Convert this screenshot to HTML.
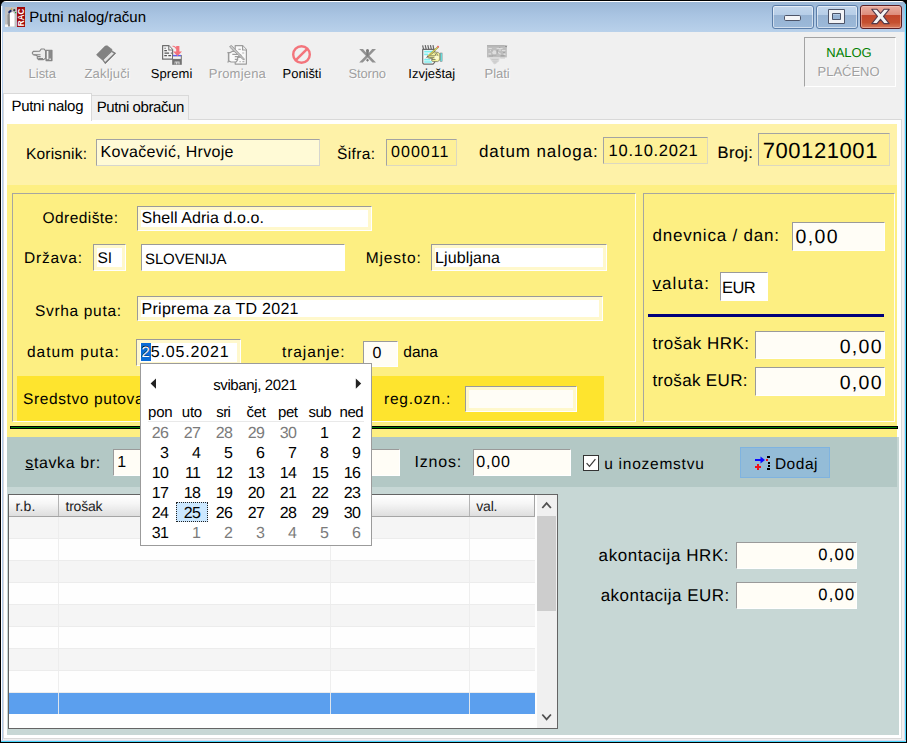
<!DOCTYPE html>
<html>
<head>
<meta charset="utf-8">
<title>Putni nalog/račun</title>
<style>
*{box-sizing:border-box;margin:0;padding:0}
html,body{width:907px;height:743px;overflow:hidden;background:#000}
body{font-family:"Liberation Sans",sans-serif;position:relative}
.abs,.t,.f,.pn{position:absolute}
.t{white-space:nowrap;line-height:20px;height:20px;text-rendering:geometricPrecision}
/* window */
#win{left:1px;top:1px;width:905px;height:741px;border-radius:5px 5px 0 0;overflow:hidden;
 background:linear-gradient(#fff 0,#fff 1px,#9bb7d6 1px,#a9c4e2 14px,#b9d1ea 31px,#b9d1ea 100%)}
#bl{left:0;top:5px;width:1px;height:736px;background:#fff}
#bl2{left:1px;top:5px;width:1px;height:736px;background:#b4cdec}
#br1{left:903px;top:31px;width:1px;height:710px;background:#d5daf0}
#br2{left:904px;top:3px;width:1px;height:738px;background:#48d6fa}
#bb1{left:0;top:739px;width:905px;height:1px;background:#d5daf0}
#bb2{left:0;top:740px;width:905px;height:1px;background:#48d6fa}
#client{left:2px;top:31px;width:901px;height:708px;background:#f0f0f0}
/* fields */
.f{border:1px solid;border-color:#9a9a9a #fff #fff #9a9a9a;background:#fff}
.ring{box-shadow:inset 0 0 0 3px #fff8cc}
.cr{background:#fffdf6}
.gb{position:absolute;border:1px solid;border-color:#a6a6a0 #fffdf0 #fffdf0 #a6a6a0}
.cb{border:1px solid #5c7ea9;border-radius:3px;box-shadow:inset 0 0 0 1px rgba(255,255,255,.55);
 background:linear-gradient(#c3d6ec 0,#b6cde7 42%,#97b3d3 43%,#9cb9d9 100%)}
.cx{border-color:#5c1f24;box-shadow:inset 0 0 0 1px rgba(255,210,200,.45);
 background:linear-gradient(#e9ada0 0,#dd8a79 42%,#c2452b 43%,#c5502f 75%,#d67a5c 100%)}
</style>
</head>
<body>
<div id="win" class="abs">
 <div id="bl" class="abs"></div><div id="bl2" class="abs"></div>
 <div id="br1" class="abs"></div><div id="br2" class="abs"></div>
 <div id="bb1" class="abs"></div><div id="bb2" class="abs"></div>
 <div id="client" class="abs"></div>
</div>
<!-- title bar -->
<svg class="abs" style="left:5px;top:7px" width="20" height="20" viewBox="0 0 20 20">
 <rect width="12" height="20" fill="#c2c2c2"/>
 <rect x="12" width="8" height="20" fill="#a10a0a"/>
 <path d="M5 6 L8 5 L9.5 7 L9.5 19.5 L5 19.5 Z" fill="#fff"/>
 <path d="M2.5 8 L4.5 5 L5 19 L2.5 19 Z" fill="#8d8d8d"/>
 <path d="M3 5 L5.5 2.5 L7 4 L4 6.5Z" fill="#1c2a6b"/>
 <circle cx="9.3" cy="3.2" r="1.1" fill="#3a3a3a"/>
 <rect x="6" y="1.5" width="1.2" height="1.2" fill="#c7a21a"/>
 <rect x="10" y="5" width="1.2" height="1.2" fill="#22a233"/>
 <rect x="0" y="17.5" width="3" height="2.5" fill="#f4f4f4"/>
 <text transform="translate(19 19.2) rotate(-90)" font-family="Liberation Sans, sans-serif" font-weight="bold" font-size="8.6" fill="#fff" textLength="17.5" lengthAdjust="spacingAndGlyphs">RAC</text>
</svg>
<span class="t" style="left:29.3px;top:7.6px;font-size:15px;color:#000">Putni nalog/račun</span>
<!-- caption buttons -->
<div class="abs cb" style="left:772px;top:5px;width:42px;height:24px"></div>
<div class="abs cb" style="left:816px;top:5px;width:42px;height:24px"></div>
<div class="abs cb cx" style="left:860px;top:5px;width:42px;height:24px"></div>
<svg class="abs" style="left:772px;top:5px" width="130" height="24" viewBox="0 0 130 24">
 <rect x="12.5" y="10.5" width="16" height="5" rx="1.2" fill="#f4f5f8" stroke="#4d5468" stroke-width="1"/>
 <path d="M56.5 4.5 h16 v14 h-16 Z M60.5 8.5 v6 h8 v-6 Z" fill="#f2f3f6" fill-rule="evenodd" stroke="#4d5468" stroke-width="1"/>
 <path d="M99.8 4.3 H105 L108.5 8.5 L112 4.3 H117.2 L111.5 11.4 L117.2 18.6 H112 L108.5 14.3 L105 18.6 H99.8 L105.5 11.4 Z" fill="#f3f3f3" stroke="#54394a" stroke-width="1.1" stroke-linejoin="round"/>
</svg>

<!--TB0--><!-- toolbar icons : each svg is 36x28 at y=40 -->
<svg class="abs" style="left:26px;top:40px" width="36" height="28" viewBox="0 0 36 28">
 <g fill="#ececec" stroke="#858585" stroke-width="1.1" stroke-linejoin="round">
  <path d="M13.5 11.3 L15.2 9 L18.2 9 L19.6 10.8 L19.6 18.2 L17.5 19.6 L12.5 19.6 L11.3 18.3 L11.3 16 L10 15.2 L7.3 14.7 L6.2 13 L7.3 11.4 Z"/>
  <path d="M7.5 14.7 H14.5 M11.5 16.6 H14.6 M12.3 18.6 H17" fill="none"/>
  <rect x="20" y="10.2" width="6" height="10.4" fill="#8a8a8a"/>
  <rect x="20.8" y="11" width="1.6" height="8.2" fill="#f2f2f2" stroke="none"/>
  <rect x="23.2" y="18.6" width="1.8" height="1.2" fill="#e8e8e8" stroke="none"/>
 </g>
</svg>
<svg class="abs" style="left:90px;top:40px" width="36" height="28" viewBox="0 0 36 28">
 <path d="M21.8 10.9 L25.7 13.2 L15.3 23.7 L12.4 19.6 Z" fill="#7a7a7a" stroke="#7c7c7c" stroke-width=".8" stroke-linejoin="round"/>
 <path d="M21.6 12 L23.9 13.4 L15.1 21.9 L13.6 19.8 Z" fill="#e6e6e6"/>
 <path d="M15.2 6 L17.2 5.8 L22 9.4 L21.9 10.8 L12.2 19.8 L6.9 15.3 L7 14.2 Z" fill="#828282" stroke="#7a7a7a" stroke-width=".6" stroke-linejoin="round"/>
</svg>
<svg class="abs" style="left:154px;top:40px" width="36" height="28" viewBox="0 0 36 28">
 <path d="M8.6 5.7 H14.8 L18.6 9.6 V19.2 H8.6 Z" fill="#f4f4f4" stroke="#6f6f6f" stroke-width="1.2" stroke-linejoin="round"/>
 <path d="M14.8 5.7 V10 H18.6" fill="#fff" stroke="#6f6f6f" stroke-width="1.1"/>
 <path d="M10.5 8.3 h1.2 M10.3 10.6 h2.6 M10.5 13.1 h4.6 M16.8 13.1 h1 M10.3 15.6 h2.6 M14.3 15.6 h2.8" stroke="#555" stroke-width="1.1"/>
 <path d="M17.8 6 Q21 5.4 22.2 7.4 L22.2 6 L25.4 6 L25.4 11.4 L28 11.4 L23.5 16 L19 11.4 L22.2 11.4 L22.2 9.2 Q21 7 17.8 6 Z" fill="#f4727a"/>
 <rect x="18.2" y="15" width="9.6" height="9.8" fill="#727272"/>
 <rect x="19" y="14.9" width="8" height="1.5" fill="#5f5ff2"/>
 <path d="M22.7 14.9 L23.5 16.2 L24.3 14.9Z" fill="#f4727a"/>
 <rect x="19" y="16.4" width="7.8" height="2.5" fill="#f2f2f2"/>
 <path d="M20.6 21.4 h5 v3.2 h-1.2 v-2 h-1 v2 h-1.4 v-2 h-.7 v2 h-.7 Z" fill="#d4d4d4"/>
</svg>
<svg class="abs" style="left:219px;top:40px" width="36" height="28" viewBox="0 0 36 28">
 <g stroke="#9c9c9c" stroke-width="1.2" fill="#fafafa" stroke-linejoin="round">
  <path d="M16.2 5.7 H23.6 L27.4 9.6 V24.1 H16.2 Z"/>
  <path d="M23.6 5.7 V10 H27.4" fill="#f4f4f4"/>
  <path d="M19.4 9.4 h2.4 M23.2 13 h2 M20.5 21.6 h1.2 M23.4 21.6 h2" stroke="#b0b0b0"/>
  <path d="M8.4 12.6 H11.4 L13.4 11.2 L16.4 11.6 L19.4 14.4 L21.8 15 L22 17 L18.6 17.6 L18.6 19.8 L17.2 21.8 L12 22 L10.6 21.2 L8.4 22.3" />
  <path d="M9.6 12.6 V21.6" stroke-width="1.6"/>
  <path d="M13.3 14.4 H19.4 M15.8 16.6 H21 M15.8 19.4 H18.4" fill="none"/>
  <path d="M11 6.2 L12.5 5.4 L25 18.6 L25.3 19.8 L24 19.5 L10.6 7 Z" fill="#c6c6c6" stroke-width=".9"/>
 </g>
</svg>
<svg class="abs" style="left:284px;top:40px" width="36" height="28" viewBox="0 0 36 28">
 <circle cx="17.5" cy="14.5" r="8.3" fill="none" stroke="#f3747b" stroke-width="2.4"/>
 <path d="M11.8 20.2 L23.2 8.8" stroke="#f3747b" stroke-width="2.5"/>
</svg>
<svg class="abs" style="left:349px;top:40px" width="36" height="28" viewBox="0 0 36 28">
 <g fill="#929292">
  <path d="M10.2 9 H14 L18.6 14.2 L23.2 9 H27 L20.4 15.8 L27 22.6 H23.4 L18.6 17.4 L13.8 22.6 H10.2 L16.8 15.8 Z"/>
  <path d="M17 10 Q18.5 8 20 10 L19.4 16.5 H17.6 Z" fill="#7c7c7c"/>
  <path d="M18.5 18.6 L20 20.2 L18.5 21.8 L17 20.2Z" fill="#7c7c7c"/>
 </g>
</svg>
<svg class="abs" style="left:414px;top:40px" width="36" height="28" viewBox="0 0 36 28">
 <path d="M8.7 9.4 H20.6 V22.4 L19 24.2 H9.8 L8.7 23 Z" fill="#fafafa" stroke="#6d6d6d" stroke-width="1.2" stroke-linejoin="round"/>
 <path d="M10.2 11.7 h8.8 M10.2 14.4 h4 M10.2 19.6 h6 M10.2 22 h7.6" stroke="#7df0f0" stroke-width="1.7"/>
 <path d="M8.6 5.4 L9.6 9.4 M11.2 5.2 L12.2 9.4 M13.8 5.2 L14.8 9.4 M16.4 5.2 L17.4 9.4 M19 5.2 L19.8 9.4" stroke="#666" stroke-width="1.2"/>
 <rect x="26.2" y="13" width="1.9" height="8.4" fill="#67efef" stroke="#777" stroke-width=".5"/>
 <path d="M17.6 13.8 L20.4 12 L24.2 12.4 L25.8 14 L25.8 20 L23.6 21.6 L18.4 21.4 L17.4 19.8 L18.8 18.8 L13.8 17.8 L14.2 15.8 Z" fill="#f5f39c" stroke="#77775e" stroke-width=".8" stroke-linejoin="round"/>
 <path d="M15 15.8 h7.4 M15.4 17.6 h5.6 M17.6 19.5 h4.4 M22.4 13 l1.6 3 M21 13.4 l1 2.2" stroke="#6e6e5a" stroke-width=".8" fill="none"/>
 <circle cx="22.6" cy="17.6" r="2.2" fill="#fbfad2"/>
 <path d="M23.6 6.6 L24.6 7.5 L14.6 16.6 L13.6 15.8 Z" fill="#e6de50" stroke="#77774e" stroke-width=".5"/>
 <path d="M22.8 7 L23.9 5.6 L25.2 6.6 L24.2 8Z" fill="#ee6a6a"/>
 <path d="M13.6 15.8 L11.4 18.4 L14.6 16.6Z" fill="#666"/>
</svg>
<svg class="abs" style="left:479px;top:40px" width="36" height="28" viewBox="0 0 36 28">
 <rect x="8" y="5.2" width="19.8" height="12.2" fill="#bebebe"/>
 <rect x="8" y="5.2" width="17.6" height="1.1" fill="#adadad"/>
 <path d="M26 6 L27.3 6.9 L27.9 5.8" stroke="#8e8e8e" stroke-width="1" fill="none"/>
 <path d="M10 17.4 L12 20.6 L14.4 23.4 L15.6 24.6 L17.4 23.2 L20 21.4 L20.6 18.4 L21 17.4Z" fill="#dadada"/>
 <path d="M21 17.4 h5 v1 h-4.6Z" fill="#c9c9c9"/>
 <g fill="#dedede"><circle cx="15.4" cy="12.4" r="2.2"/><path d="M9.4 8 h3.4 v1 h-3.4Z M17.6 8 h6 v.9 h-6Z M18.6 11.4 l3.4 2.4 l-.6 .9 l-3.4 -2.4Z M9.4 13.2 h2.6 v1.2 h-2.6Z M23 10 h3.4 v1 h-3.4Z M11.4 9.8 l2 1.4 l-.5 .7 l-2 -1.4Z M20 9.6 h2 v.8 h-2Z M24.6 13.4 h2 v1.6 h-2Z"/></g>
 <g fill="#a6a6a6"><path d="M12 10.6 h1.6 v.9 h-1.6Z M17.6 10 h1.2 v3.6 h-1.2Z M21.6 15 h4 v1.4 h-4Z M10 15.6 h4 v1 h-4Z M24 12 h2 v.9 h-2Z M13.4 14.8 h4 v.8 h-4Z M20 7 h1.4 v.8 h-1.4Z"/></g>
 <g fill="#c4c4c4"><path d="M12.4 19 h7 v.8 h-7Z M13.6 20.8 h5 v.8 h-5Z M14.6 22.4 h2.8 v.8 h-2.8Z"/></g>
</svg>
<!-- NALOG / PLACENO panel -->
<div class="abs" style="left:804px;top:37px;width:92px;height:50px;border:1px solid;border-color:#a3a3a3 #fff #fff #a3a3a3"></div>
<!--TB1-->
<!-- tabs -->
<div class="abs" style="left:3px;top:119px;width:899px;height:620px;border:1px solid #d9d9d9;background:#fff"></div>
<div class="abs" style="left:91px;top:95px;width:98px;height:25px;border:1px solid #d9d9d9;border-bottom:none;background:#f0f0f0"></div>
<div class="abs" style="left:3px;top:93px;width:89px;height:28px;border:1px solid #d9d9d9;border-bottom:none;background:#fff"></div>

<!-- yellow panels -->
<div class="abs" style="left:7px;top:124px;width:890px;height:61px;background:#fef2a8"></div>
<div class="abs" style="left:7px;top:185px;width:890px;height:252px;background:#fdef82"></div>
<!-- grey-blue panels -->
<div class="abs" style="left:7px;top:437px;width:892px;height:298px;background:#c7d7d5"></div>
<div class="abs" style="left:7px;top:437px;width:890px;height:50px;background:#b3c8c5"></div>
<!-- separator -->
<div class="abs" style="left:10px;top:426px;width:888px;height:3px;background:#008000;border:1px solid #000"></div>

<!-- group boxes -->
<div class="gb" style="left:12px;top:193px;width:624px;height:229px"></div>
<div class="gb" style="left:643px;top:193px;width:252px;height:229px"></div>
<div class="abs" style="left:17px;top:376px;width:587px;height:45px;background:#fee42e"></div>
<div class="abs" style="left:648px;top:314px;width:236px;height:3px;background:#00007a"></div>

<!-- top strip fields -->
<div class="f" style="left:96px;top:139px;width:224px;height:27px;background:#fffad6;border-color:#a3a3a3 #d6d6d0 #d6d6d0 #a3a3a3"></div>
<div class="f" style="left:386px;top:139px;width:71px;height:27px;background:#fef098;border-color:#a3a3a3 #dcd8c0 #dcd8c0 #a3a3a3"></div>
<div class="f" style="left:603px;top:137px;width:105px;height:27px;background:#fef098;border-color:#a3a3a3 #dcd8c0 #dcd8c0 #a3a3a3"></div>
<div class="f" style="left:758px;top:133px;width:132px;height:33px;background:#fef098;border-color:#a3a3a3 #dcd8c0 #dcd8c0 #a3a3a3"></div>

<!-- left group fields -->
<div class="f ring" style="left:137px;top:206px;width:235px;height:25px"></div>
<div class="f ring" style="left:93px;top:244px;width:33px;height:27px"></div>
<div class="f" style="left:141px;top:244px;width:204px;height:27px"></div>
<div class="f ring" style="left:431px;top:244px;width:176px;height:27px"></div>
<div class="f ring" style="left:137px;top:296px;width:466px;height:25px"></div>
<div class="f ring" style="left:136px;top:339px;width:105px;height:27px"></div>
<div class="abs" style="left:141px;top:343px;width:10px;height:18px;background:#0a6cd6"></div>
<div class="f cr" style="left:363px;top:341px;width:35px;height:26px"></div>
<div class="f cr ring" style="left:465px;top:386px;width:112px;height:26px"></div>

<!-- right group fields -->
<div class="f cr" style="left:792px;top:222px;width:93px;height:29px"></div>
<div class="f" style="left:720px;top:272px;width:48px;height:29px"></div>
<div class="f cr" style="left:755px;top:331px;width:130px;height:28px"></div>
<div class="f cr" style="left:755px;top:367px;width:130px;height:29px"></div>

<!-- bottom strip fields -->
<div class="f cr" style="left:113px;top:449px;width:40px;height:27px"></div>
<div class="f cr" style="left:158px;top:449px;width:242px;height:27px"></div>
<div class="f cr" style="left:473px;top:449px;width:98px;height:27px"></div>
<div class="f cr" style="left:736px;top:542px;width:121px;height:27px"></div>
<div class="f cr" style="left:736px;top:582px;width:121px;height:27px"></div>

<!-- checkbox -->
<div class="abs" style="left:583px;top:455px;width:16px;height:16px;background:#fff;border:1px solid #333"></div>
<svg class="abs" style="left:583px;top:455px" width="16" height="16" viewBox="0 0 16 16"><path d="M3.6 8.2 L6.5 11.4 L12.4 4.2" fill="none" stroke="#3a3a3a" stroke-width="1.25"/></svg>

<!-- Dodaj button -->
<div class="abs" style="left:740px;top:447px;width:90px;height:31px;background:#94bcd7;border:1px solid #7fb3e0"></div>
<svg class="abs" style="left:750px;top:452px" width="24" height="22" viewBox="0 0 24 22" shape-rendering="crispEdges">
 <rect x="5" y="7" width="7" height="2" fill="#0a0aff"/>
 <path d="M10.5 4.6 L15 8 L10.5 11.4 Z" fill="#0a0aff" shape-rendering="geometricPrecision"/>
 <rect x="5" y="14" width="6" height="2" fill="#f0101a"/>
 <rect x="7" y="12" width="2" height="6" fill="#f0101a"/>
 <rect x="16" y="7" width="2" height="2" fill="#f0101a"/>
 <rect x="17" y="4" width="3" height="2" fill="#000"/>
 <rect x="17.5" y="10" width="2.5" height="2" fill="#000"/>
 <rect x="17.5" y="13" width="2.5" height="2" fill="#000"/>
 <rect x="17" y="16" width="3" height="2" fill="#000"/>
</svg>

<!--TA0--><!-- table -->
<div class="abs" style="left:8px;top:494px;width:550px;height:235px;background:#fefefe;border:1px solid #646464"></div>
<div class="abs" style="left:9px;top:495px;width:526px;height:22px;background:linear-gradient(#ffffff 0,#f6f6f6 40%,#dedede 100%);border-bottom:1px solid #a5a5a5;border-right:1px solid #a5a5a5"></div>
<div class="abs" style="left:58px;top:495px;width:1px;height:21px;background:#b4b4b4"></div>
<div class="abs" style="left:330px;top:495px;width:1px;height:21px;background:#b4b4b4"></div>
<div class="abs" style="left:469px;top:495px;width:1px;height:21px;background:#b4b4b4"></div>
<div class="abs" style="left:9px;top:517px;width:526px;height:22px;background:#f5f5f5;border-bottom:1px solid #ececec"></div>
<div class="abs" style="left:9px;top:539px;width:526px;height:22px;background:#fefefe;border-bottom:1px solid #ececec"></div>
<div class="abs" style="left:9px;top:561px;width:526px;height:22px;background:#f5f5f5;border-bottom:1px solid #ececec"></div>
<div class="abs" style="left:9px;top:583px;width:526px;height:22px;background:#fefefe;border-bottom:1px solid #ececec"></div>
<div class="abs" style="left:9px;top:605px;width:526px;height:22px;background:#f5f5f5;border-bottom:1px solid #ececec"></div>
<div class="abs" style="left:9px;top:627px;width:526px;height:22px;background:#fefefe;border-bottom:1px solid #ececec"></div>
<div class="abs" style="left:9px;top:649px;width:526px;height:22px;background:#f5f5f5;border-bottom:1px solid #ececec"></div>
<div class="abs" style="left:9px;top:671px;width:526px;height:22px;background:#fefefe;border-bottom:1px solid #ececec"></div>
<div class="abs" style="left:9px;top:693px;width:526px;height:21px;background:#5b9fee"></div>
<div class="abs" style="left:58px;top:517px;width:1px;height:197px;background:rgba(236,236,236,.9)"></div>
<div class="abs" style="left:330px;top:517px;width:1px;height:197px;background:rgba(236,236,236,.9)"></div>
<div class="abs" style="left:469px;top:517px;width:1px;height:197px;background:rgba(236,236,236,.9)"></div>
<div class="abs" style="left:537px;top:495px;width:20px;height:233px;background:#f0f0f0"></div>
<div class="abs" style="left:537px;top:516px;width:19px;height:95px;background:#cdcdcd"></div>
<svg class="abs" style="left:537px;top:495px" width="20" height="233" viewBox="0 0 20 233"><path d="M5.3 13 L9.6 8.2 L13.9 13" fill="none" stroke="#505050" stroke-width="1.8"/><path d="M5.3 219.5 L9.6 224.3 L13.9 219.5" fill="none" stroke="#505050" stroke-width="1.8"/></svg>
<!--TA1-->
<span class="t" style="left:26.00px;top:144.73px;font-size:15.5px;color:#000;letter-spacing:0.195px;">Korisnik:</span>
<span class="t" style="left:337.00px;top:144.73px;font-size:15.5px;color:#000;letter-spacing:0.362px;">Šifra:</span>
<span class="t" style="left:479.00px;top:141.91px;font-size:17px;color:#000;letter-spacing:0.917px;">datum naloga:</span>
<span class="t" style="left:717.60px;top:142.68px;font-size:16.5px;color:#000;letter-spacing:0.316px;-webkit-text-stroke:.15px #000;">Broj:</span>
<span class="t" style="left:100.50px;top:142.96px;font-size:16px;color:#000;letter-spacing:0.310px;">Kovačević, Hrvoje</span>
<span class="t" style="left:391.00px;top:142.96px;font-size:16px;color:#000;letter-spacing:1.059px;">000011</span>
<span class="t" style="left:608.60px;top:140.98px;font-size:16.5px;color:#000;letter-spacing:0.734px;">10.10.2021</span>
<span class="t" style="left:762.70px;top:140.68px;font-size:22px;color:#000;letter-spacing:0.572px;">700121001</span>
<span class="t" style="left:42.50px;top:209.13px;font-size:15.5px;color:#000;letter-spacing:0.443px;">Odredište:</span>
<span class="t" style="left:24.00px;top:249.03px;font-size:15.5px;color:#000;letter-spacing:0.766px;">Država:</span>
<span class="t" style="left:365.75px;top:249.03px;font-size:15.5px;color:#000;letter-spacing:0.839px;">Mjesto:</span>
<span class="t" style="left:35.00px;top:301.68px;font-size:15.5px;color:#000;letter-spacing:0.672px;">Svrha puta:</span>
<span class="t" style="left:27.00px;top:342.68px;font-size:15.5px;color:#000;letter-spacing:0.989px;">datum puta:</span>
<span class="t" style="left:282.00px;top:342.68px;font-size:15.5px;color:#000;letter-spacing:0.918px;">trajanje:</span>
<span class="t" style="left:403.25px;top:342.68px;font-size:15.5px;color:#000;letter-spacing:0.005px;">dana</span>
<span class="t" style="left:384.00px;top:389.63px;font-size:15.5px;color:#000;letter-spacing:0.742px;">reg.ozn.:</span>
<span class="t" style="left:141.50px;top:209.16px;font-size:16px;color:#000;letter-spacing:0.090px;">Shell Adria d.o.o.</span>
<span class="t" style="left:97.50px;top:249.33px;font-size:15.5px;color:#000;letter-spacing:-0.156px;">SI</span>
<span class="t" style="left:145.00px;top:249.50px;font-size:15px;color:#000;letter-spacing:-0.129px;">SLOVENIJA</span>
<span class="t" style="left:435.00px;top:249.16px;font-size:16px;color:#000;letter-spacing:0.117px;">Ljubljana</span>
<span class="t" style="left:141.50px;top:299.66px;font-size:16px;color:#000;letter-spacing:0.290px;">Priprema za TD 2021</span>
<span class="t" style="left:372.50px;top:344.26px;font-size:16px;color:#000;letter-spacing:0.000px;">0</span>
<span class="t" style="left:141.00px;top:343.06px;font-size:16px;color:#000;letter-spacing:0.836px;">25.05.2021</span>
<span class="t" style="left:23.00px;top:389.63px;font-size:15.5px;color:#000;letter-spacing:0.610px;">Sredstvo putovanja:</span>
<span class="t" style="left:652.50px;top:226.41px;font-size:17px;color:#000;letter-spacing:0.799px;">dnevnica / dan:</span>
<span class="t" style="left:652.50px;top:273.91px;font-size:17px;color:#000;letter-spacing:1.068px;"><u>v</u>aluta:</span>
<span class="t" style="left:652.50px;top:334.01px;font-size:17px;color:#000;letter-spacing:0.486px;">trošak HRK:</span>
<span class="t" style="left:652.50px;top:371.01px;font-size:17px;color:#000;letter-spacing:0.336px;">trošak EUR:</span>
<span class="t" style="left:795.60px;top:227.04px;font-size:19.5px;color:#000;letter-spacing:1.316px;">0,00</span>
<span class="t" style="left:722.00px;top:278.28px;font-size:16.5px;color:#000;letter-spacing:-0.600px;">EUR</span>
<span class="t" style="left:839.70px;top:336.74px;font-size:19.5px;color:#000;letter-spacing:1.316px;">0,00</span>
<span class="t" style="left:839.70px;top:372.74px;font-size:19.5px;color:#000;letter-spacing:1.316px;">0,00</span>
<span class="t" style="left:25.30px;top:453.86px;font-size:16px;color:#000;letter-spacing:0.616px;"><u>s</u>tavka br:</span>
<span class="t" style="left:117.30px;top:453.26px;font-size:16px;color:#000;letter-spacing:0.000px;">1</span>
<span class="t" style="left:414.50px;top:452.76px;font-size:16px;color:#000;letter-spacing:0.812px;">Iznos:</span>
<span class="t" style="left:476.25px;top:452.96px;font-size:16px;color:#000;letter-spacing:0.870px;">0,00</span>
<span class="t" style="left:604.20px;top:454.93px;font-size:15.5px;color:#000;letter-spacing:0.752px;">u inozemstvu</span>
<span class="t" style="left:774.90px;top:454.83px;font-size:15.5px;color:#000;letter-spacing:0.525px;">Dodaj</span>
<span class="t" style="left:598.60px;top:546.41px;font-size:17px;color:#000;letter-spacing:0.579px;">akontacija HRK:</span>
<span class="t" style="left:600.70px;top:586.41px;font-size:17px;color:#000;letter-spacing:0.472px;">akontacija EUR:</span>
<span class="t" style="left:818.20px;top:545.18px;font-size:16.5px;color:#000;letter-spacing:1.325px;">0,00</span>
<span class="t" style="left:818.20px;top:585.18px;font-size:16.5px;color:#000;letter-spacing:1.325px;">0,00</span>
<span class="t" style="left:15.40px;top:495.85px;font-size:14px;color:#222;letter-spacing:0.144px;">r.b.</span>
<span class="t" style="left:65.50px;top:495.85px;font-size:14px;color:#222;letter-spacing:-0.225px;">trošak</span>
<span class="t" style="left:476.25px;top:495.85px;font-size:14px;color:#222;letter-spacing:-0.182px;">val.</span>
<span class="t" style="left:28.60px;top:63.70px;font-size:13px;color:#a0a0a0;letter-spacing:-0.042px;text-shadow:1px 1px 0 #fff;">Lista</span>
<span class="t" style="left:84.50px;top:63.70px;font-size:13px;color:#a0a0a0;letter-spacing:0.160px;text-shadow:1px 1px 0 #fff;">Zaključi</span>
<span class="t" style="left:150.70px;top:63.70px;font-size:13px;color:#000;letter-spacing:0.083px;">Spremi</span>
<span class="t" style="left:208.80px;top:63.70px;font-size:13px;color:#a0a0a0;letter-spacing:0.194px;text-shadow:1px 1px 0 #fff;">Promjena</span>
<span class="t" style="left:282.60px;top:63.70px;font-size:13px;color:#000;letter-spacing:-0.055px;">Poništi</span>
<span class="t" style="left:348.50px;top:63.70px;font-size:13px;color:#a0a0a0;letter-spacing:-0.142px;text-shadow:1px 1px 0 #fff;">Storno</span>
<span class="t" style="left:408.30px;top:63.70px;font-size:13px;color:#000;letter-spacing:-0.009px;">Izvještaj</span>
<span class="t" style="left:484.60px;top:63.70px;font-size:13px;color:#a0a0a0;letter-spacing:-0.074px;text-shadow:1px 1px 0 #fff;">Plati</span>
<span class="t" style="left:826.30px;top:42.90px;font-size:13px;color:#008000;letter-spacing:-0.054px;">NALOG</span>
<span class="t" style="left:817.60px;top:62.30px;font-size:13px;color:#a0a0a0;letter-spacing:-0.023px;text-shadow:1px 1px 0 #fff;">PLAĆENO</span>
<span class="t" style="left:213.20px;top:375.60px;font-size:15px;color:#000;letter-spacing:-0.384px;z-index:6;">svibanj, 2021</span>
<span class="t" style="left:148.00px;top:402.70px;font-size:15px;color:#000;letter-spacing:-0.166px;z-index:6;">pon</span>
<span class="t" style="left:181.80px;top:402.70px;font-size:15px;color:#000;letter-spacing:-0.230px;z-index:6;">uto</span>
<span class="t" style="left:216.30px;top:402.70px;font-size:15px;color:#000;letter-spacing:-0.600px;z-index:6;">sri</span>
<span class="t" style="left:246.60px;top:402.70px;font-size:15px;color:#000;letter-spacing:-0.358px;z-index:6;">čet</span>
<span class="t" style="left:278.00px;top:402.70px;font-size:15px;color:#000;letter-spacing:-0.430px;z-index:6;">pet</span>
<span class="t" style="left:308.60px;top:402.70px;font-size:15px;color:#000;letter-spacing:-0.600px;z-index:6;">sub</span>
<span class="t" style="left:339.50px;top:402.70px;font-size:15px;color:#000;letter-spacing:-0.416px;z-index:6;">ned</span>
<span class="t" style="left:11.50px;top:97.30px;font-size:15px;color:#000;letter-spacing:-0.306px;">Putni nalog</span>
<span class="t" style="left:96.70px;top:98.40px;font-size:15px;color:#000;letter-spacing:-0.407px;">Putni obračun</span>
<span class="t" style="left:141.5px;top:343px;font-size:15px;color:#fff;letter-spacing:1.2px;z-index:3">2</span>
<!--CA0--><!-- calendar popup -->
<div class="abs" style="left:140px;top:363px;width:232px;height:183px;background:#fff;border:1px solid #9b9b9b;z-index:4"></div>
<div class="abs" style="left:148px;top:421px;width:216px;height:1px;background:#e9e9e9;z-index:5"></div>
<div class="abs" style="left:176px;top:502px;width:32px;height:20px;background:#cce8ff;border:1px dotted #222;z-index:5"></div>
<svg class="abs" style="left:140px;top:363px;z-index:5" width="232" height="40" viewBox="0 0 232 40"><path d="M10.6 20.6 L16 15.4 L16 25.8Z" fill="#222"/><path d="M221.2 20.6 L215.8 15.4 L215.8 25.8Z" fill="#222"/></svg>
<span class="t" style="left:138px;width:30px;text-align:right;top:423.56px;font-size:16px;color:#7b7b7b;letter-spacing:-.8px;z-index:6">26</span>
<span class="t" style="left:170px;width:30px;text-align:right;top:423.56px;font-size:16px;color:#7b7b7b;letter-spacing:-.8px;z-index:6">27</span>
<span class="t" style="left:202px;width:30px;text-align:right;top:423.56px;font-size:16px;color:#7b7b7b;letter-spacing:-.8px;z-index:6">28</span>
<span class="t" style="left:234px;width:30px;text-align:right;top:423.56px;font-size:16px;color:#7b7b7b;letter-spacing:-.8px;z-index:6">29</span>
<span class="t" style="left:266px;width:30px;text-align:right;top:423.56px;font-size:16px;color:#7b7b7b;letter-spacing:-.8px;z-index:6">30</span>
<span class="t" style="left:298px;width:30px;text-align:right;top:423.56px;font-size:16px;color:#000;letter-spacing:-.8px;z-index:6">1</span>
<span class="t" style="left:330px;width:30px;text-align:right;top:423.56px;font-size:16px;color:#000;letter-spacing:-.8px;z-index:6">2</span>
<span class="t" style="left:138px;width:30px;text-align:right;top:443.56px;font-size:16px;color:#000;letter-spacing:-.8px;z-index:6">3</span>
<span class="t" style="left:170px;width:30px;text-align:right;top:443.56px;font-size:16px;color:#000;letter-spacing:-.8px;z-index:6">4</span>
<span class="t" style="left:202px;width:30px;text-align:right;top:443.56px;font-size:16px;color:#000;letter-spacing:-.8px;z-index:6">5</span>
<span class="t" style="left:234px;width:30px;text-align:right;top:443.56px;font-size:16px;color:#000;letter-spacing:-.8px;z-index:6">6</span>
<span class="t" style="left:266px;width:30px;text-align:right;top:443.56px;font-size:16px;color:#000;letter-spacing:-.8px;z-index:6">7</span>
<span class="t" style="left:298px;width:30px;text-align:right;top:443.56px;font-size:16px;color:#000;letter-spacing:-.8px;z-index:6">8</span>
<span class="t" style="left:330px;width:30px;text-align:right;top:443.56px;font-size:16px;color:#000;letter-spacing:-.8px;z-index:6">9</span>
<span class="t" style="left:138px;width:30px;text-align:right;top:463.56px;font-size:16px;color:#000;letter-spacing:-.8px;z-index:6">10</span>
<span class="t" style="left:170px;width:30px;text-align:right;top:463.56px;font-size:16px;color:#000;letter-spacing:-.8px;z-index:6">11</span>
<span class="t" style="left:202px;width:30px;text-align:right;top:463.56px;font-size:16px;color:#000;letter-spacing:-.8px;z-index:6">12</span>
<span class="t" style="left:234px;width:30px;text-align:right;top:463.56px;font-size:16px;color:#000;letter-spacing:-.8px;z-index:6">13</span>
<span class="t" style="left:266px;width:30px;text-align:right;top:463.56px;font-size:16px;color:#000;letter-spacing:-.8px;z-index:6">14</span>
<span class="t" style="left:298px;width:30px;text-align:right;top:463.56px;font-size:16px;color:#000;letter-spacing:-.8px;z-index:6">15</span>
<span class="t" style="left:330px;width:30px;text-align:right;top:463.56px;font-size:16px;color:#000;letter-spacing:-.8px;z-index:6">16</span>
<span class="t" style="left:138px;width:30px;text-align:right;top:483.56px;font-size:16px;color:#000;letter-spacing:-.8px;z-index:6">17</span>
<span class="t" style="left:170px;width:30px;text-align:right;top:483.56px;font-size:16px;color:#000;letter-spacing:-.8px;z-index:6">18</span>
<span class="t" style="left:202px;width:30px;text-align:right;top:483.56px;font-size:16px;color:#000;letter-spacing:-.8px;z-index:6">19</span>
<span class="t" style="left:234px;width:30px;text-align:right;top:483.56px;font-size:16px;color:#000;letter-spacing:-.8px;z-index:6">20</span>
<span class="t" style="left:266px;width:30px;text-align:right;top:483.56px;font-size:16px;color:#000;letter-spacing:-.8px;z-index:6">21</span>
<span class="t" style="left:298px;width:30px;text-align:right;top:483.56px;font-size:16px;color:#000;letter-spacing:-.8px;z-index:6">22</span>
<span class="t" style="left:330px;width:30px;text-align:right;top:483.56px;font-size:16px;color:#000;letter-spacing:-.8px;z-index:6">23</span>
<span class="t" style="left:138px;width:30px;text-align:right;top:503.56px;font-size:16px;color:#000;letter-spacing:-.8px;z-index:6">24</span>
<span class="t" style="left:170px;width:30px;text-align:right;top:503.56px;font-size:16px;color:#000;letter-spacing:-.8px;z-index:6">25</span>
<span class="t" style="left:202px;width:30px;text-align:right;top:503.56px;font-size:16px;color:#000;letter-spacing:-.8px;z-index:6">26</span>
<span class="t" style="left:234px;width:30px;text-align:right;top:503.56px;font-size:16px;color:#000;letter-spacing:-.8px;z-index:6">27</span>
<span class="t" style="left:266px;width:30px;text-align:right;top:503.56px;font-size:16px;color:#000;letter-spacing:-.8px;z-index:6">28</span>
<span class="t" style="left:298px;width:30px;text-align:right;top:503.56px;font-size:16px;color:#000;letter-spacing:-.8px;z-index:6">29</span>
<span class="t" style="left:330px;width:30px;text-align:right;top:503.56px;font-size:16px;color:#000;letter-spacing:-.8px;z-index:6">30</span>
<span class="t" style="left:138px;width:30px;text-align:right;top:523.56px;font-size:16px;color:#000;letter-spacing:-.8px;z-index:6">31</span>
<span class="t" style="left:170px;width:30px;text-align:right;top:523.56px;font-size:16px;color:#7b7b7b;letter-spacing:-.8px;z-index:6">1</span>
<span class="t" style="left:202px;width:30px;text-align:right;top:523.56px;font-size:16px;color:#7b7b7b;letter-spacing:-.8px;z-index:6">2</span>
<span class="t" style="left:234px;width:30px;text-align:right;top:523.56px;font-size:16px;color:#7b7b7b;letter-spacing:-.8px;z-index:6">3</span>
<span class="t" style="left:266px;width:30px;text-align:right;top:523.56px;font-size:16px;color:#7b7b7b;letter-spacing:-.8px;z-index:6">4</span>
<span class="t" style="left:298px;width:30px;text-align:right;top:523.56px;font-size:16px;color:#7b7b7b;letter-spacing:-.8px;z-index:6">5</span>
<span class="t" style="left:330px;width:30px;text-align:right;top:523.56px;font-size:16px;color:#7b7b7b;letter-spacing:-.8px;z-index:6">6</span>
<!--CA1-->

</body>
</html>
